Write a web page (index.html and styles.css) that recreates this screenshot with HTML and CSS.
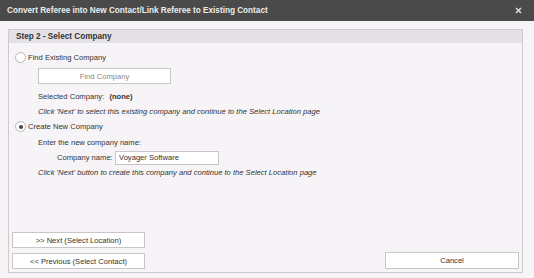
FILE: index.html
```html
<!DOCTYPE html>
<html lang="en">
<head>
    <meta charset="UTF-8">
    <title>Convert Referee into New Contact</title>
    <link rel="stylesheet" href="styles.css">
</head>
<body>
    <div class="dialog">
        <div class="titlebar">
            <span class="title">Convert Referee into New Contact/Link Referee to Existing Contact</span>
            <svg class="close" width="7" height="7" viewBox="0 0 7 7">
                <path d="M1 1 L6 6 M6 1 L1 6" stroke="#d8d8d8" stroke-width="1.6"/>
            </svg>
        </div>

        <div class="content">
            <div class="panel">
                <div class="panel-header">Step 2 - Select Company</div>

                <div class="panel-body">
                    <div class="option"><span class="radio"></span>Find Existing Company</div>
                    <div class="sub">
                        <button class="btn find-btn">Find Company</button>
                        <div class="line selected">Selected Company: <b>(none)</b></div>
                        <div class="hint">Click 'Next' to select this existing company and continue to the Select Location page</div>
                    </div>

                    <div class="option"><span class="radio checked"></span>Create New Company</div>
                    <div class="sub">
                        <div class="line enter">Enter the new company name:</div>
                        <div class="field-row">
                            <label>Company name:</label>
                            <input type="text" value="Voyager Software">
                        </div>
                        <div class="hint">Click 'Next' button to create this company and continue to the Select Location page</div>
                    </div>
                </div>

                <div class="panel-footer">
                    <div class="nav-buttons">
                        <button class="btn">&gt;&gt; Next (Select Location)</button>
                        <button class="btn">&lt;&lt; Previous (Select Contact)</button>
                    </div>
                    <button class="btn cancel">Cancel</button>
                </div>
            </div>
        </div>
    </div>
</body>
</html>
```

FILE: styles.css
```css
body {
    margin: 0;
    padding: 0;
    font-family: "Liberation Sans", Arial, sans-serif;
    font-size: 7.6px;
    color: #333;
    background-color: #f7f4f7;
}
.dialog {
    width: 534px;
    height: 278px;
    display: flex;
    flex-direction: column;
}
.titlebar {
    height: 21px;
    background-color: #4a4a4a;
    color: #ececec;
    display: flex;
    align-items: center;
    justify-content: space-between;
    padding: 0 12px 0 7px;
    flex-shrink: 0;
}
.title {
    font-weight: bold;
    font-size: 8.2px;
}
.close {
    display: block;
}
.content {
    flex: 1;
    padding: 8px 11px 5px 8px;
    display: flex;
    min-height: 0;
}
.panel {
    flex: 1;
    border: 1px solid #cdc9cd;
    display: flex;
    flex-direction: column;
}
.panel-header {
    height: 13px;
    line-height: 13px;
    background-color: #e4e1e5;
    font-weight: bold;
    font-size: 8.2px;
    padding-left: 7px;
    color: #333;
}
.panel-body {
    flex: 1;
    padding-top: 7px;
}
.option {
    height: 15px;
    display: flex;
    align-items: center;
    padding-left: 6px;
}
.radio {
    width: 9px;
    height: 9px;
    border: 1px solid #b8b5b8;
    border-radius: 50%;
    background-color: #fff;
    margin-right: 2px;
    display: flex;
    align-items: center;
    justify-content: center;
}
.radio.checked::after {
    content: "";
    width: 4px;
    height: 4px;
    border-radius: 50%;
    background-color: #444;
}
.sub {
    padding-left: 29px;
}
.btn {
    display: block;
    height: 16px;
    padding: 0;
    margin: 0;
    border: 1px solid #c8c6c8;
    background-color: #fff;
    font-family: inherit;
    font-size: 7.6px;
    color: #333;
    text-align: center;
}
.find-btn {
    width: 133px;
    height: 16px;
    margin-top: 3px;
    color: #888;
}
.line {
    height: 14px;
    line-height: 14px;
}
.selected {
    margin-top: 6px;
}
.selected b {
    margin-left: 3px;
}
.hint {
    height: 15px;
    line-height: 15px;
    font-style: italic;
}
.enter {
    margin-top: 2px;
}
.field-row {
    display: flex;
    align-items: center;
    height: 15px;
    padding-left: 19px;
}
.field-row label {
    width: 58px;
}
.field-row input {
    width: 104px;
    height: 14px;
    box-sizing: border-box;
    border: 1px solid #c8c6c8;
    background-color: #fff;
    font-family: inherit;
    font-size: 7.6px;
    color: #333;
    padding: 0 3px;
    margin: 0;
}
.panel-footer {
    display: flex;
    justify-content: space-between;
    align-items: flex-end;
    padding: 0 3px 3px 3px;
}
.nav-buttons {
    display: flex;
    flex-direction: column;
    gap: 5px;
}
.nav-buttons .btn {
    width: 133px;
}
.cancel {
    width: 134px;
    height: 17px;
}
```
